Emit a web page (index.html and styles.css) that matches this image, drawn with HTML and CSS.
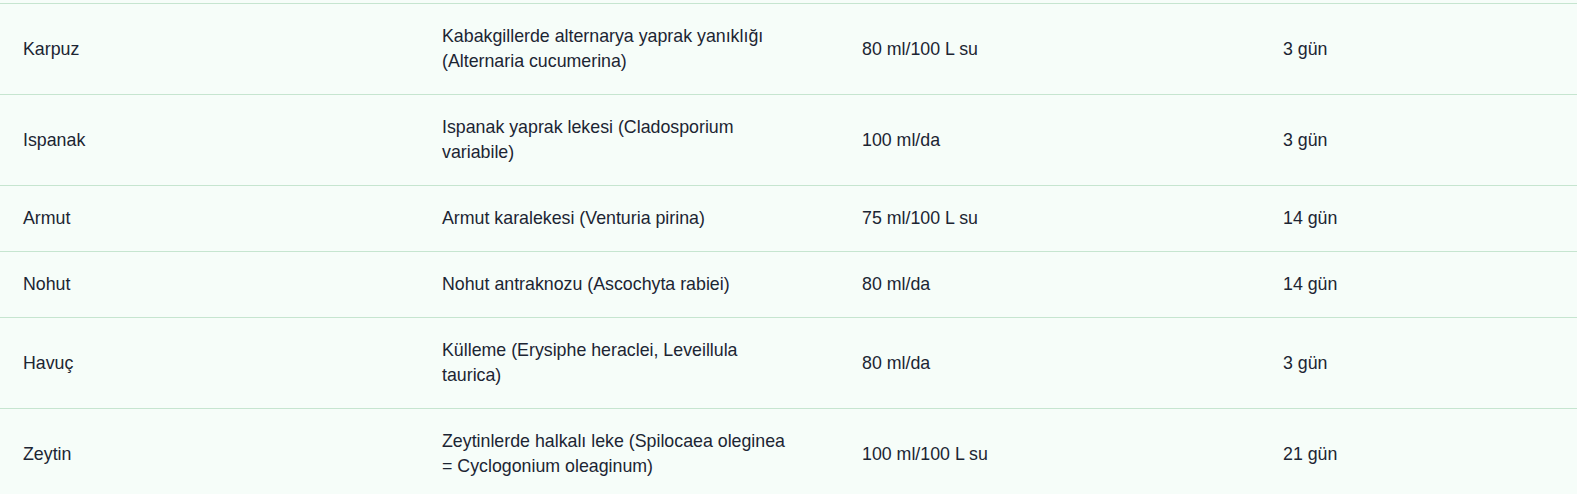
FILE: index.html
```html
<!DOCTYPE html>
<html lang="tr">
<head>
<meta charset="utf-8">
<title>Tablo</title>
<link rel="stylesheet" href="styles.css">
</head>
<body>
<div class="wrap">
<table class="dose-table">
<colgroup>
<col class="c1"><col class="c2"><col class="c3"><col class="c4">
</colgroup>
<tbody>
<tr><td>Karpuz</td><td class="disease">Kabakgillerde alternarya yaprak yanıklığı (Alternaria cucumerina)</td><td>80 ml/100 L su</td><td>3 gün</td></tr>
<tr><td>Ispanak</td><td class="disease">Ispanak yaprak lekesi (Cladosporium variabile)</td><td>100 ml/da</td><td>3 gün</td></tr>
<tr><td>Armut</td><td class="disease">Armut karalekesi (Venturia pirina)</td><td>75 ml/100 L su</td><td>14 gün</td></tr>
<tr><td>Nohut</td><td class="disease">Nohut antraknozu (Ascochyta rabiei)</td><td>80 ml/da</td><td>14 gün</td></tr>
<tr><td>Havuç</td><td class="disease">Külleme (Erysiphe heraclei, Leveillula taurica)</td><td>80 ml/da</td><td>3 gün</td></tr>
<tr><td>Zeytin</td><td class="disease">Zeytinlerde halkalı leke (Spilocaea oleginea = Cyclogonium oleaginum)</td><td>100 ml/100 L su</td><td>21 gün</td></tr>
</tbody>
</table>
</div>
</body>
</html>
```
FILE: styles.css
```css
html, body {
  margin: 0;
  padding: 0;
  background: #f6fdf9;
  overflow: hidden;
}
.wrap {
  padding-top: 3px;
}
.dose-table {
  width: 1577px;
  table-layout: fixed;
  border-collapse: collapse;
  font-family: "Liberation Sans", Arial, sans-serif;
  font-size: 17.8px;
  line-height: 25px;
  color: #1c2533;
}
.c1 { width: 419px; }
.c2 { width: 420px; }
.c3 { width: 421px; }
.c4 { width: 317px; }
.dose-table tr {
  border-top: 1px solid #c6e5d0;
}
.dose-table td {
  padding: 20px 23px;
  vertical-align: middle;
  text-align: left;
}
.dose-table td.disease {
  padding-right: 45px;
}
```
